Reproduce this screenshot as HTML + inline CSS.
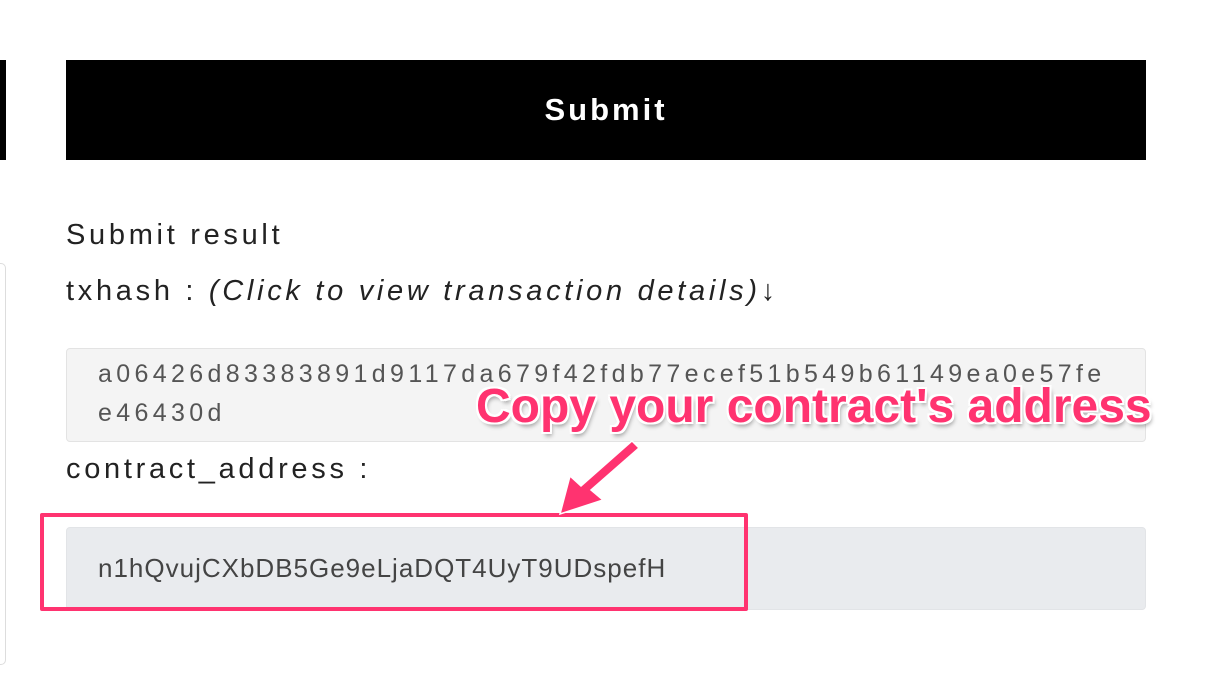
<!DOCTYPE html>
<html><head><meta charset="utf-8"><style>
body{margin:0;width:1228px;height:676px;background:#fff;position:relative;overflow:hidden;font-family:"Liberation Sans",Arial,sans-serif;}
.a{position:absolute;}
.l{font-size:29px;letter-spacing:3.7px;color:#222;white-space:nowrap}
</style></head><body>
<div class="a" style="left:0;top:60px;width:6px;height:100px;background:#000"></div>
<div class="a" style="left:-10px;top:263px;width:14px;height:400px;border:1px solid #ddd;border-radius:5px;background:#fff"></div>
<div class="a" style="left:66px;top:60px;width:1080px;height:100px;background:#000;color:#fff;font-weight:bold;font-size:31px;letter-spacing:3px;text-align:center;line-height:100px">Submit</div>
<div class="a l" style="left:66px;top:219px">Submit result</div>
<div class="a l" style="left:66px;top:275px">txhash : <i>(Click to view transaction details)</i>↓</div>
<div class="a" style="left:66px;top:348px;width:1078px;height:92px;background:#f4f4f4;border:1px solid #e3e3e3;border-radius:4px"></div>
<div class="a" style="left:98px;top:360px;font-size:25px;letter-spacing:4.35px;color:#555;white-space:nowrap">a06426d83383891d9117da679f42fdb77ecef51b549b61149ea0e57fe</div>
<div class="a" style="left:98px;top:399px;font-size:25px;letter-spacing:4.35px;color:#555">e46430d</div>
<div class="a l" style="left:66px;top:453px">contract_address :</div>
<div class="a" style="left:66px;top:527px;width:1078px;height:81px;background:#e9ebee;border:1px solid #e2e4e7;border-radius:4px"></div>
<div class="a" style="left:98px;top:553px;font-size:26px;letter-spacing:1px;color:#444;white-space:nowrap">n1hQvujCXbDB5Ge9eLjaDQT4UyT9UDspefH</div>
<div class="a" style="left:40px;top:513px;width:700px;height:90px;border:4px solid #ff3370;border-radius:2px"></div>
<svg class="a" style="left:0;top:0" width="1228" height="676">
<path d="M639 448 L591 490 L603 500 L560 514 L570 476 L581 486 L632 441 Z" fill="#ff3370" stroke="#fff" stroke-width="1.5"/>
</svg>
<div class="a" style="left:476px;top:379px;font-size:48px;font-weight:bold;color:#ff3370;white-space:nowrap;letter-spacing:0px;text-shadow:-2px -2px 0 #fff,2px -2px 0 #fff,-2px 2px 0 #fff,2px 2px 0 #fff,0 2px 0 #fff,0 -2px 0 #fff,2px 0 0 #fff,-2px 0 0 #fff,2px 4px 4px rgba(0,0,0,.35)">Copy your contract's address</div>
</body></html>
